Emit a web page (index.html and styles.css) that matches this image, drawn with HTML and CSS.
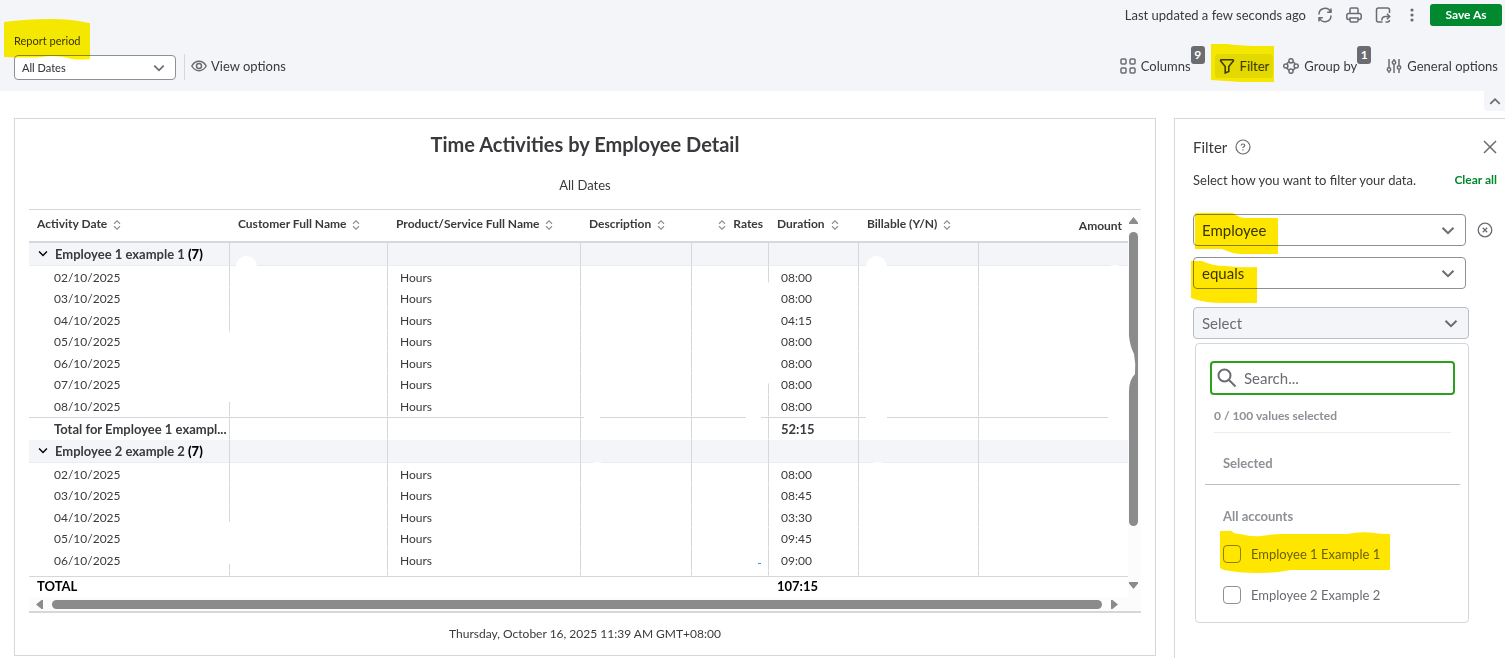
FILE: index.html
```html
<!DOCTYPE html>
<html lang="en">
<head>
  <meta charset="utf-8">
  <title>Time Activities by Employee Detail</title>
  <meta name="viewport" content="width=device-width, initial-scale=1">
  <link rel="stylesheet" href="styles.css">
</head>
<body>

<svg class="defs" aria-hidden="true">
  <symbol id="chevron" viewBox="0 0 14 8"><path d="M1.5 1.2 7 6.7l5.500-5.500" fill="none" stroke="currentColor" stroke-width="2"/></symbol>
  <symbol id="sort" viewBox="0 0 8 10"><path d="M1 3.800 4 .9l3 2.900M1 6.200 4 9.100l3-2.900" fill="none" stroke="currentColor" stroke-width="1.200"/></symbol>
</svg>

<header class="toolbar">
  <div class="status">
    <span class="updated">Last updated a few seconds ago</span>
    <button class="icon-btn" type="button" aria-label="Refresh">
      <svg width="16" height="16" viewBox="0 0 16 16"><path d="M2 7.500A6 6 0 0 1 13.500 5M14 8.500A6 6 0 0 1 2.500 11M14 1.500V5.300H10.200M2 14.500v-3.800h3.800"/></svg>
    </button>
    <button class="icon-btn" type="button" aria-label="Print">
      <svg width="16" height="16" viewBox="0 0 16 16"><path d="M4 6.500V2.300Q4 1 5.300 1h5.400Q12 1 12 2.300v4.200M4 12.500H2.700Q.8 12.500.8 10.600V8.500Q.8 6.500 2.700 6.500h10.600q1.900 0 1.900 2v2.100q0 1.900-1.900 1.900H12M4 11h8v2.700q0 1.300-1.300 1.300H5.300Q4 15 4 13.700z"/></svg>
    </button>
    <button class="icon-btn" type="button" aria-label="Export">
      <svg width="16" height="16" viewBox="0 0 16 16"><path d="M14.500 6V3q0-2-2-2h-9q-2 0-2 2v10q0 2 2 2h4M6.800 13.500q0-4 4-4h3.700M12 6.800l2.700 2.700-2.700 2.700M10.500 15h2q2 0 2-2"/></svg>
    </button>
    <button class="icon-btn" type="button" aria-label="More">
      <svg width="16" height="16" viewBox="0 0 16 16"><g class="dots"><circle cx="8" cy="3" r="1.600"/><circle cx="8" cy="8" r="1.600"/><circle cx="8" cy="13" r="1.600"/></g></svg>
    </button>
    <button class="save" type="button">Save As</button>
  </div>

  <div class="options">
    <div class="period">
      <label for="period">Report period</label>
      <div class="select select-small">
        <select id="period"><option>All Dates</option></select>
        <svg width="12" height="8"><use href="#chevron"/></svg>
      </div>
      <svg class="mark mark-period" width="86" height="42" viewBox="0 0 86 42"><path d="M0 4Q22 1 48 1q18 0 32 3 3 1 6 1v36q-10 1-18 0-16-5-30-2-12 1-38 0z"/></svg>
    </div>
    <button class="option view" type="button">
      <svg width="16" height="16" viewBox="0 0 16 16"><path d="M.8 8Q3.500 3.300 8 3.300T15.200 8Q12.500 12.700 8 12.700T.8 8z"/><circle cx="8" cy="8" r="2.500"/></svg>
      View options
    </button>
    <div class="tools">
      <button class="option columns" type="button">
        <svg width="16" height="16" viewBox="0 0 16 16"><rect x="1" y="1" width="5" height="5" rx="1"/><rect x="10" y="1" width="5" height="5" rx="1"/><rect x="1" y="10" width="5" height="5" rx="1"/><rect x="10" y="10" width="5" height="5" rx="1"/></svg>
        Columns
        <span class="badge">9</span>
      </button>
      <button class="option filter" type="button">
        <svg width="16" height="16" viewBox="0 0 16 16"><path d="M2 1.800h12q.9.500.3 1.300L9.800 8.500v5L6.200 15V8.500L1.700 3.100q-.6-.8.300-1.300z"/></svg>
        Filter
        <svg class="mark mark-filter" width="63" height="40" viewBox="0 0 63 40"><path d="M0 0h16q16 2 35 2h12v36H30q-14-1-30-2z"/></svg>
      </button>
      <button class="option group" type="button">
        <svg width="16" height="16" viewBox="0 0 16 16"><circle cx="8" cy="2.800" r="2.100"/><circle cx="8" cy="13.200" r="2.100"/><circle cx="2.800" cy="8" r="2.100"/><circle cx="13.200" cy="8" r="2.100"/><path d="M5.900 3.800 3.800 5.900M10.100 3.800l2.100 2.100M5.900 12.200l-2.100-2.100M10.100 12.200l2.100-2.100"/></svg>
        Group by
        <span class="badge">1</span>
      </button>
      <button class="option general" type="button">
        <svg width="16" height="16" viewBox="0 0 16 16"><path d="M3 1v8.500M3 13.500V15M8 1v1.500M8 6.500V15M13 1v6.500M13 11.500V15"/><circle cx="3" cy="11.500" r="1.700"/><circle cx="8" cy="4.500" r="1.700"/><circle cx="13" cy="9.500" r="1.700"/></svg>
        General options
      </button>
    </div>
  </div>
</header>

<div class="collapse-row">
  <button class="collapse" type="button" aria-label="Collapse"><svg width="12" height="7"><use href="#chevron"/></svg></button>
</div>

<main class="content">
  <section class="report">
    <h1>Time Activities by Employee Detail</h1>
    <p class="subtitle">All Dates</p>

    <div class="grid">
      <div class="grid-body">
        <table>
          <colgroup><col class="c-date"><col class="c-customer"><col class="c-product"><col class="c-desc"><col class="c-rates"><col class="c-duration"><col class="c-billable"><col></colgroup>
          <thead>
            <tr>
              <th>Activity Date <svg width="8" height="10"><use href="#sort"/></svg></th>
              <th>Customer Full Name <svg width="8" height="10"><use href="#sort"/></svg></th>
              <th>Product/Service Full Name <svg width="8" height="10"><use href="#sort"/></svg></th>
              <th>Description <svg width="8" height="10"><use href="#sort"/></svg></th>
              <th class="rates"><svg width="8" height="10"><use href="#sort"/></svg> Rates</th>
              <th>Duration <svg width="8" height="10"><use href="#sort"/></svg></th>
              <th>Billable (Y/N) <svg width="8" height="10"><use href="#sort"/></svg></th>
              <th class="amount">Amount</th>
            </tr>
          </thead>
          <tbody>
            <tr class="group-row"><td><svg width="10" height="7"><use href="#chevron"/></svg>Employee 1 example 1 <b>(7)</b></td><td></td><td></td><td></td><td></td><td></td><td></td><td></td></tr>
            <tr><td>02/10/2025</td><td></td><td>Hours</td><td></td><td></td><td>08:00</td><td></td><td></td></tr>
            <tr><td>03/10/2025</td><td></td><td>Hours</td><td></td><td></td><td>08:00</td><td></td><td></td></tr>
            <tr><td>04/10/2025</td><td></td><td>Hours</td><td></td><td></td><td>04:15</td><td></td><td></td></tr>
            <tr><td>05/10/2025</td><td></td><td>Hours</td><td></td><td></td><td>08:00</td><td></td><td></td></tr>
            <tr><td>06/10/2025</td><td></td><td>Hours</td><td></td><td></td><td>08:00</td><td></td><td></td></tr>
            <tr><td>07/10/2025</td><td></td><td>Hours</td><td></td><td></td><td>08:00</td><td></td><td></td></tr>
            <tr><td>08/10/2025</td><td></td><td>Hours</td><td></td><td></td><td>08:00</td><td></td><td></td></tr>
            <tr class="subtotal"><td>Total for Employee 1 exampl...</td><td></td><td></td><td></td><td></td><td>52:15</td><td></td><td></td></tr>
          </tbody>
          <tbody>
            <tr class="group-row"><td><svg width="10" height="7"><use href="#chevron"/></svg>Employee 2 example 2 <b>(7)</b></td><td></td><td></td><td></td><td></td><td></td><td></td><td></td></tr>
            <tr><td>02/10/2025</td><td></td><td>Hours</td><td></td><td></td><td>08:00</td><td></td><td></td></tr>
            <tr><td>03/10/2025</td><td></td><td>Hours</td><td></td><td></td><td>08:45</td><td></td><td></td></tr>
            <tr><td>04/10/2025</td><td></td><td>Hours</td><td></td><td></td><td>03:30</td><td></td><td></td></tr>
            <tr><td>05/10/2025</td><td></td><td>Hours</td><td></td><td></td><td>09:45</td><td></td><td></td></tr>
            <tr><td>06/10/2025</td><td></td><td>Hours</td><td></td><td></td><td>09:00</td><td></td><td></td></tr>
            <tr class="partial"><td></td><td></td><td></td><td></td><td></td><td></td><td></td><td></td></tr>
          </tbody>
          <tfoot>
            <tr><td>TOTAL</td><td></td><td></td><td></td><td></td><td>107:15</td><td></td><td></td></tr>
          </tfoot>
        </table>
        <div class="vscroll">
          <svg width="9" height="7" viewBox="0 0 9 7"><path d="M4.500 0 9 5.500V7H0V5.500z"/></svg>
          <div class="track"><div class="thumb"></div></div>
          <svg width="9" height="7" viewBox="0 0 9 7"><path d="M0 0h9v1.500L4.500 7 0 1.500z"/></svg>
        </div>
      </div>
      <div class="hscroll">
        <svg width="7" height="9" viewBox="0 0 7 9"><path d="M7 0v9H5.500L0 4.500 5.500 0z"/></svg>
        <div class="thumb"></div>
        <svg width="7" height="9" viewBox="0 0 7 9"><path d="M0 0v9h1.500L7 4.500 1.500 0z"/></svg>
      </div>
      <!-- cell values painted out -->
      <svg class="erased" width="1112" height="405" viewBox="0 0 1112 405">
        <path d="M207 57a10.500 11 0 0 1 21 0v135h-30V122h9zM198 312h14v42h-14zM555 204h16v10h-16zM717 204h15v10h-15zM733 71q4-3 7 2v100q-3 4-7 2zM837 57a10.500 11 0 0 1 21 0v153h-21zM1078 57q8-4 16 0v10h-16zM1079 204h20v10h-20zM560 254q8-4 16 0v3h-16zM840 254q9-4 18 0v3h-18z"/>
        <path d="M1098 126h2q1 10 5 18 2 10 1 20-6 6-6 17h-2z"/>
        <path class="ink" d="M729 353.500h3"/>
      </svg>
    </div>
    <p class="stamp">Thursday, October 16, 2025 11:39 AM GMT+08:00</p>
  </section>

  <aside class="panel">
    <div class="panel-head">
      <h2>Filter</h2>
      <svg class="help" width="16" height="16" viewBox="0 0 16 16"><circle cx="8" cy="8" r="7"/><path d="M6.200 6.600Q6.200 5 8 5t1.800 1.500Q9.800 7.500 8 8.300v.8M8 10.300v1.200"/></svg>
      <button class="close" type="button" aria-label="Close"><svg width="14" height="14" viewBox="0 0 14 14"><path d="M1 1l12 12M13 1 1 13"/></svg></button>
    </div>
    <div class="panel-intro">
      <span>Select how you want to filter your data.</span>
      <a href="#">Clear all</a>
    </div>

    <div class="rule">
      <div class="select">
        <select aria-label="Field"><option>Employee</option></select>
        <svg width="14" height="9"><use href="#chevron"/></svg>
        <svg class="mark mark-field" width="84" height="42" viewBox="0 0 84 42"><path d="M0 0h38q6 5 13 5h32v36H46q-8 0-19-5H0z"/></svg>
      </div>
      <button class="remove" type="button" aria-label="Remove filter"><svg width="16" height="16" viewBox="0 0 16 16"><circle cx="8" cy="8" r="6.800"/><path d="M5.800 5.800l4.400 4.400M10.200 5.800l-4.400 4.400"/></svg></button>
    </div>
    <div class="rule">
      <div class="select">
        <select aria-label="Condition"><option>equals</option></select>
        <svg width="14" height="9"><use href="#chevron"/></svg>
        <svg class="mark mark-condition" width="67" height="43" viewBox="0 0 67 43"><path d="M0 0h11q10 5 24 5 14 2 31 1v36H33Q12 42 0 37z"/></svg>
      </div>
    </div>
    <div class="values">
      <div class="select select-open">
        <select aria-label="Values"><option>Select</option></select>
        <svg width="14" height="9"><use href="#chevron"/></svg>
      </div>
      <div class="dropdown">
        <div class="search">
          <svg width="20" height="20" viewBox="0 0 20 20"><circle cx="7.500" cy="7.500" r="6"/><path d="M12 12l6.500 6.500"/></svg>
          <input type="text" placeholder="Search..." aria-label="Search values">
        </div>
        <p class="count">0 / 100 values selected</p>
        <h3>Selected</h3>
        <h3 class="all">All accounts</h3>
        <label class="check"><input type="checkbox">Employee 1 Example 1
          <svg class="mark mark-check" width="170" height="42" viewBox="0 0 170 42"><path d="M0 0h12q1 3 8 3 12 3 21 2 12-2 20-2h66q14-3 28-1 5 1 15 1v36H70q-12 3-32 3-20 0-34-3l-4-2z"/></svg>
        </label>
        <label class="check"><input type="checkbox">Employee 2 Example 2</label>
      </div>
    </div>
  </aside>
</main>

</body>
</html>
```

FILE: styles.css
```css
* {
  box-sizing: border-box;
}
body {
  background: #fff;
  color: #393a3d;
  display: flex;
  flex-direction: column;
  font: 13px/18px Lato, "Open Sans", sans-serif;
  margin: 0;
  min-height: 100vh;
}
h1, h2, h3, p {
  margin: 0;
}
button, select, input {
  color: inherit;
  font: inherit;
}
button {
  background: none;
  border: 0;
  cursor: pointer;
  padding: 0;
}
svg {
  display: block;
  fill: none;
  flex: none;
  stroke: #6b6c72;
  stroke-width: 1.5px;
}
.defs {
  height: 0;
  position: absolute;
  width: 0;
}

/* yellow marker strokes */
.mark {
  fill: #ffe600;
  mix-blend-mode: multiply;
  pointer-events: none;
  position: absolute;
  stroke: none;
}
.toolbar .mark {
  fill: #fff100;
}

/* toolbar */
.toolbar {
  background: #f4f5f8;
  padding: 4px 3px 11px 14px;
}
.status {
  align-items: center;
  display: flex;
  gap: 13px;
  height: 22px;
  justify-content: flex-end;
}
.updated {
  margin-right: -2px;
}
.dots {
  fill: #6b6c72;
  stroke: none;
}
.save {
  background: #00892e;
  border-radius: 3px;
  color: #fff;
  font-size: 12px;
  font-weight: bold;
  height: 22px;
  margin-left: -3px;
  width: 72px;
}
.options {
  align-items: flex-end;
  display: flex;
  height: 54px;
}
.period {
  position: relative;
}
.period label {
  display: block;
  font-size: 11px;
  line-height: 16px;
  margin-bottom: 6px;
}
.mark-period {
  left: -10px;
  top: -15px;
}
.option {
  align-items: center;
  display: flex;
  gap: 4px;
  height: 24px;
  margin-bottom: 2px;
  position: relative;
  white-space: nowrap;
}
.view {
  border-left: 1px solid #d4d7dc;
  height: 26px;
  margin: 0 0 0 8px;
  padding: 0 0 2px 6px;
}
.tools {
  display: flex;
  margin-left: auto;
  padding-right: 4px;
}
.tools .option {
  gap: 5px;
}
.tools .filter {
  background: #e3e5e8;
  border-radius: 4px;
  margin: 0 10px 2px 24px;
  padding: 0 4px;
}
.filter svg {
  stroke: #393a3d;
}
.filter .mark {
  left: -4px;
  stroke: none;
  top: -10px;
}
.general {
  margin-left: 29px;
}
.badge {
  background: #6b6c72;
  border-radius: 3px;
  color: #fff;
  font-size: 12px;
  font-weight: bold;
  left: 100%;
  position: absolute;
  top: -8px;
  width: 14px;
}
.collapse-row {
  display: flex;
  height: 27px;
  justify-content: flex-end;
}
.collapse {
  background: #f4f5f8;
  border-radius: 0 0 0 4px;
  color: #6b6c72;
  display: grid;
  height: 20px;
  place-items: center;
  width: 21px;
}
.collapse svg {
  transform: rotate(180deg);
}

/* drop-downs: the arrow shares the cell with the control */
.select {
  align-items: center;
  display: grid;
  position: relative;
  width: 273px;
}
.select select {
  appearance: none;
  background: #fff;
  border: 1px solid #8d9096;
  border-radius: 4px;
  font-size: 15px;
  grid-area: 1 / 1;
  height: 32px;
  padding: 0 8px;
  width: 100%;
}
.select > svg:not(.mark) {
  color: #6b6c72;
  grid-area: 1 / 1;
  justify-self: end;
  margin-right: 11px;
  pointer-events: none;
  z-index: 1;
}
.select-small {
  width: 162px;
}
.select-small select {
  font-size: 11px;
  font-weight: 500;
  height: 25px;
  padding: 0 7px;
}

/* report */
.content {
  display: flex;
  flex: 1;
  gap: 18px;
  padding-left: 14px;
}
.report {
  border: 1px solid #d4d7dc;
  flex: 1;
  margin-bottom: 2px;
  min-width: 0;
  padding: 13px 14px 8px;
  text-align: center;
}
.report h1 {
  font-size: 20px;
  line-height: 24px;
}
.subtitle {
  margin: 20px 0 15px;
}
.grid {
  border-bottom: 2px solid #d4d7dc;
  border-top: 1px solid #d4d7dc;
  position: relative;
}
.grid-body {
  display: flex;
}
table {
  border-spacing: 0;
  flex: 1;
  min-width: 0;
  table-layout: fixed;
  text-align: left;
}
.c-date { width: 201px; }
.c-customer { width: 158px; }
.c-product { width: 193px; }
.c-desc { width: 111px; }
.c-rates { width: 77px; }
.c-duration { width: 90px; }
.c-billable { width: 120px; }
th {
  border-bottom: 2px solid #d4d7dc;
  font-size: 12px;
  font-weight: bold;
  height: 33px;
  line-height: 16px;
  padding: 0 0 4px 8px;
  white-space: nowrap;
}
th svg {
  color: #8d9096;
  display: inline-block;
  margin-left: 3px;
  vertical-align: -2px;
}
.rates, .amount {
  padding-right: 6px;
  text-align: right;
}
.rates svg {
  margin-right: 4px;
}
.amount {
  padding-bottom: 0;
}
td {
  border-bottom: 1px solid #f4f5f8;
  border-right: 1px solid #d4d7dc;
  font-size: 12px;
  height: 22px;
  line-height: 16px;
  overflow: hidden;
  padding: 2px 0 0 12px;
  white-space: nowrap;
}
tbody tr:nth-child(odd) td {
  height: 21px;
}
td:first-child {
  padding-left: 25px;
}
td:last-child {
  border-right: 0;
}
tbody tr:not(.group-row) td {
  border-bottom-color: #fff;
}
tbody tr.group-row td {
  background: #f4f5f8;
  border-bottom-color: #ebecef;
  font-size: 13px;
  font-weight: bold;
  height: 23px;
  padding-top: 0;
}
.group-row td:first-child {
  padding-left: 9px;
}
.group-row svg {
  color: #000;
  display: inline-block;
  margin-right: 7px;
  vertical-align: 2px;
}
.group-row b {
  color: #000;
}
tbody tr.subtotal td {
  border-top: 1px solid #d4d7dc;
  font-size: 13px;
  font-weight: bold;
  height: 23px;
  padding-top: 0;
}
tbody tr.partial td {
  height: 5px;
  line-height: 0;
  padding: 0;
}
tfoot td {
  border-bottom: 0;
  border-right: 0;
  border-top: 1px solid #d4d7dc;
  color: #000;
  font-size: 13px;
  font-weight: bold;
  height: 21px;
  padding: 0 0 2px 8px;
}
tfoot td:first-child {
  padding-left: 8px;
}
.vscroll {
  align-items: center;
  background: #fcfcfc;
  display: flex;
  flex-direction: column;
  gap: 8px;
  padding: 7px 3px 8px 1px;
  width: 13px;
}
.vscroll svg, .hscroll svg {
  fill: #8b8b8b;
  stroke: none;
}
.thumb {
  background: #8b8b8b;
  border-radius: 5px;
  flex: 1;
  height: 9px;
}
.track {
  flex: 1;
}
.track .thumb {
  height: 86%;
  width: 9px;
}
.hscroll {
  align-items: center;
  background: #fcfcfc;
  display: flex;
  gap: 9px;
  height: 14px;
  padding: 0 23px 0 7px;
}
.erased {
  fill: #fff;
  left: 0;
  pointer-events: none;
  position: absolute;
  stroke: none;
  top: 0;
}
.ink {
  stroke: #4a90c8;
  stroke-width: 1px;
}
.stamp {
  font-size: 12px;
  margin-top: 12px;
}

/* filter panel */
.panel {
  border: solid #d4d7dc;
  border-width: 1px 0 0 1px;
  flex: none;
  padding: 18px 8px 0 18px;
  width: 331px;
}
.panel-head {
  align-items: center;
  display: flex;
  gap: 8px;
  height: 20px;
}
.panel-head h2 {
  font-size: 15px;
  font-weight: normal;
}
.help {
  stroke-width: 1.200px;
}
.close {
  margin-left: auto;
}
.panel-intro {
  align-items: center;
  display: flex;
  justify-content: space-between;
  margin: 14px 0 25px;
}
.panel-intro a {
  color: #00892e;
  font-size: 12px;
  font-weight: bold;
  text-decoration: none;
}
.rule {
  align-items: center;
  display: flex;
  gap: 11px;
  margin-bottom: 11px;
}
.remove svg {
  stroke-width: 1.300px;
}
.mark-field {
  left: 2px;
  top: -1px;
}
.mark-condition {
  left: -2px;
  top: 4px;
}
.values {
  padding-top: 7px;
  width: 276px;
}
.select-open {
  width: auto;
}
.select-open select {
  background: #f4f5f8;
  border-color: #babec5;
  color: #6b6c72;
}
.dropdown {
  border: 1px solid #d4d7dc;
  border-radius: 4px;
  color: #6b6c72;
  margin: 4px 0 0 2px;
  padding: 17px 8px 7px 9px;
}
.search {
  align-items: center;
  border: 2px solid #2ca01c;
  border-radius: 4px;
  display: flex;
  gap: 7px;
  height: 34px;
  margin: 0 5px;
  padding: 0 5px;
}
.search svg {
  stroke-width: 2px;
}
.search input {
  border: 0;
  flex: 1;
  font-size: 15px;
  min-width: 0;
  outline: 0;
  padding: 0;
}
.search input::placeholder {
  color: #6b6c72;
}
.count {
  border-bottom: 1px solid #ebecef;
  color: #8d9096;
  font-size: 12px;
  font-weight: bold;
  margin: 12px 9px 21px;
  padding-bottom: 7px;
}
.dropdown h3 {
  border-bottom: 1px solid #babec5;
  color: #8d9096;
  font-size: 13px;
  padding: 0 18px 12px;
}
.dropdown .all {
  border: 0;
  margin-top: 22px;
}
.check {
  align-items: center;
  display: flex;
  gap: 10px;
  height: 41px;
  padding-left: 18px;
  position: relative;
}
.check:first-of-type {
  margin-top: -4px;
}
.check input {
  appearance: none;
  background: #fff;
  border: 1px solid #8d9096;
  border-radius: 4px;
  height: 18px;
  margin: 0;
  width: 18px;
}
.mark-check {
  left: 15px;
  top: -2px;
}
```
